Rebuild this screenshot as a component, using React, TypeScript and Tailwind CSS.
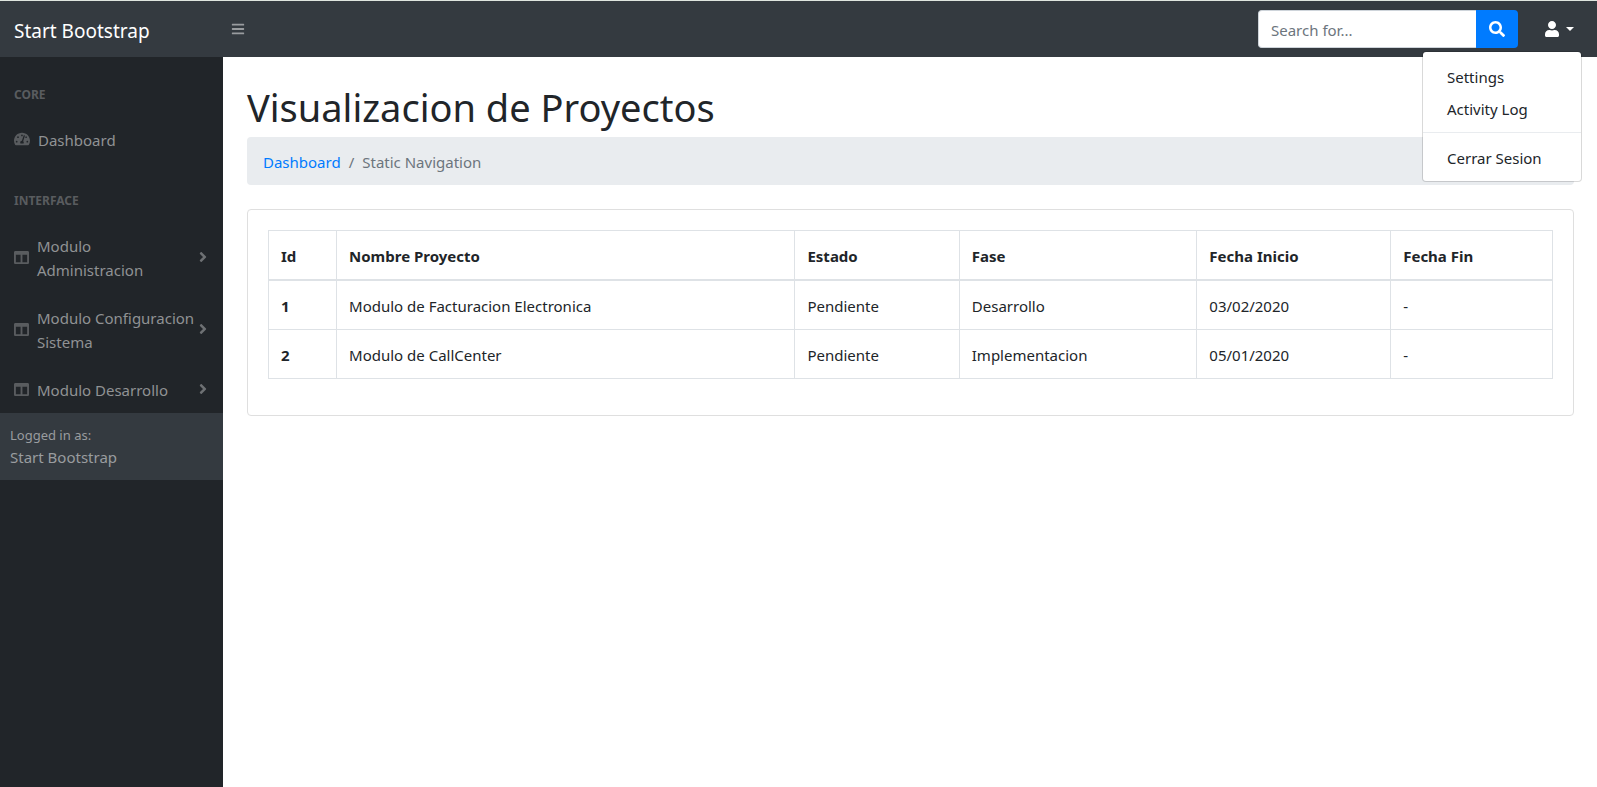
import React from "react";
import {
  FaAngleRight,
  FaBars,
  FaColumns,
  FaSearch,
  FaTachometerAlt,
  FaUser,
} from "react-icons/fa";

const modules = ["Modulo Administracion", "Modulo Configuracion Sistema", "Modulo Desarrollo"];

const columns = [
  { label: "Id", width: "w-[5.3%]" },
  { label: "Nombre Proyecto", width: "w-[35.7%]" },
  { label: "Estado", width: "w-[12.8%]" },
  { label: "Fase", width: "w-[18.5%]" },
  { label: "Fecha Inicio", width: "w-[15.1%]" },
  { label: "Fecha Fin", width: "w-[12.6%]" },
];

const projects = [
  ["1", "Modulo de Facturacion Electronica", "Pendiente", "Desarrollo", "03/02/2020", "-"],
  ["2", "Modulo de CallCenter", "Pendiente", "Implementacion", "05/01/2020", "-"],
];

function TopBar() {
  return (
    <header className="flex h-[57px] shrink-0 items-center border-t border-[#dfe5df] bg-[#343a40]">
      <a href="#" className="w-[223px] shrink-0 pb-px pl-[14px] pt-1 text-[19px] leading-[30px] text-white">
        Start Bootstrap
      </a>
      <button type="button" aria-label="Toggle navigation" className="px-2 text-[#999c9f]">
        <FaBars size={14} />
      </button>
      <form className="ml-auto flex h-[38px]" onSubmit={(e) => e.preventDefault()}>
        <input
          type="text"
          aria-label="Search for"
          placeholder="Search for..."
          className="w-[218px] rounded-l border border-r-0 border-[#ced4da] bg-white px-3 pt-[2px] text-[#495057] outline-none placeholder:text-[#6c757d]"
        />
        <button
          type="button"
          aria-label="Search"
          className="flex w-[42px] items-center justify-center rounded-r bg-[#007bff] text-white"
        >
          <FaSearch size={16} />
        </button>
      </form>
      <div className="relative ml-4 mr-[15px]">
        <button
          type="button"
          aria-label="User menu"
          aria-expanded="true"
          className="flex h-10 items-center gap-[7px] pl-[11px] pr-2 text-white"
        >
          <FaUser size={16} className="-mx-px" />
          <span className="border-x-4 border-t-4 border-x-transparent border-t-white" />
        </button>
        <div className="absolute right-0 top-full z-10 mt-[2px] w-[160px] rounded border border-black/15 bg-white bg-clip-padding py-2 leading-6 text-[#212529]">
          <a href="#" className="block px-6 pb-[3px] pt-[5px]">Settings</a>
          <a href="#" className="block px-6 pb-[3px] pt-[5px]">Activity Log</a>
          <hr className="my-2 border-[#e9ecef]" />
          <a href="#" className="block px-6 pb-[3px] pt-[5px]">Cerrar Sesion</a>
        </div>
      </div>
    </header>
  );
}

function SideHeading({ children }: { children: React.ReactNode }) {
  return (
    <h2 className="px-[14px] pb-[11px] pt-[29px] text-xs font-bold uppercase leading-[18px] text-[#595c5f]">
      {children}
    </h2>
  );
}

function SideBar() {
  return (
    <aside className="w-[223px] shrink-0 bg-[#212529] leading-6 text-[#909294]">
      <nav>
        <SideHeading>Core</SideHeading>
        <a href="#" className="flex items-center px-[14px] py-[11px]">
          <FaTachometerAlt size={16} className="mr-2 shrink-0 text-[#595c5f]" />
          <span className="pt-[2px]">Dashboard</span>
        </a>
        <SideHeading>Interface</SideHeading>
        {modules.map((name) => (
          <a key={name} href="#" className="flex items-center py-[11px] pl-[14px] pr-3">
            <FaColumns size={15} className="mr-2 shrink-0 text-[#595c5f]" />
            <span className="flex-1 pt-[2px]">{name}</span>
            <FaAngleRight size={16} className="shrink-0 text-[#6d7073]" />
          </a>
        ))}
      </nav>
      <div className="bg-[#343a40] px-[10px] pb-[11px] pt-3 text-[#999c9f]">
        <div className="text-[13px] leading-5">Logged in as:</div>
        Start Bootstrap
      </div>
    </aside>
  );
}

function ProjectTable() {
  return (
    <table className="mb-4 w-full table-fixed border-collapse border border-[#dee2e6] text-left leading-6">
      <thead>
        <tr>
          {columns.map((c) => (
            <th key={c.label} scope="col" className={`${c.width} border border-b-2 border-[#dee2e6] px-3 pb-[11px] pt-[13px] font-bold`}>
              {c.label}
            </th>
          ))}
        </tr>
      </thead>
      <tbody>
        {projects.map(([id, ...cells]) => (
          <tr key={id}>
            <th scope="row" className="border border-[#dee2e6] px-3 pb-[11px] pt-[13px] font-bold">{id}</th>
            {cells.map((cell, i) => (
              <td key={i} className="border border-[#dee2e6] px-3 pb-[11px] pt-[13px]">{cell}</td>
            ))}
          </tr>
        ))}
      </tbody>
    </table>
  );
}

export default function App() {
  return (
    <div className="flex min-h-screen flex-col bg-white font-['Noto_Sans','Open_Sans',sans-serif] text-[15px] text-[#212529]">
      <TopBar />
      <div className="flex flex-1">
        <SideBar />
        <main className="min-w-0 flex-1 pl-6 pr-[23px] pt-[26px]">
          <h1 className="mb-[6px] text-[38px] leading-[48px]">Visualizacion de Proyectos</h1>
          <nav aria-label="Breadcrumb" className="mb-6 rounded bg-[#e9ecef] px-4 pb-[11px] pt-[13px] leading-6">
            <ol className="flex gap-2 text-[#6c757d]">
              <li><a href="#" className="text-[#007bff]">Dashboard</a></li>
              <li aria-hidden="true">/</li>
              <li>Static Navigation</li>
            </ol>
          </nav>
          <section className="rounded border border-[#dfdfdf] p-5">
            <ProjectTable />
          </section>
        </main>
      </div>
    </div>
  );
}
